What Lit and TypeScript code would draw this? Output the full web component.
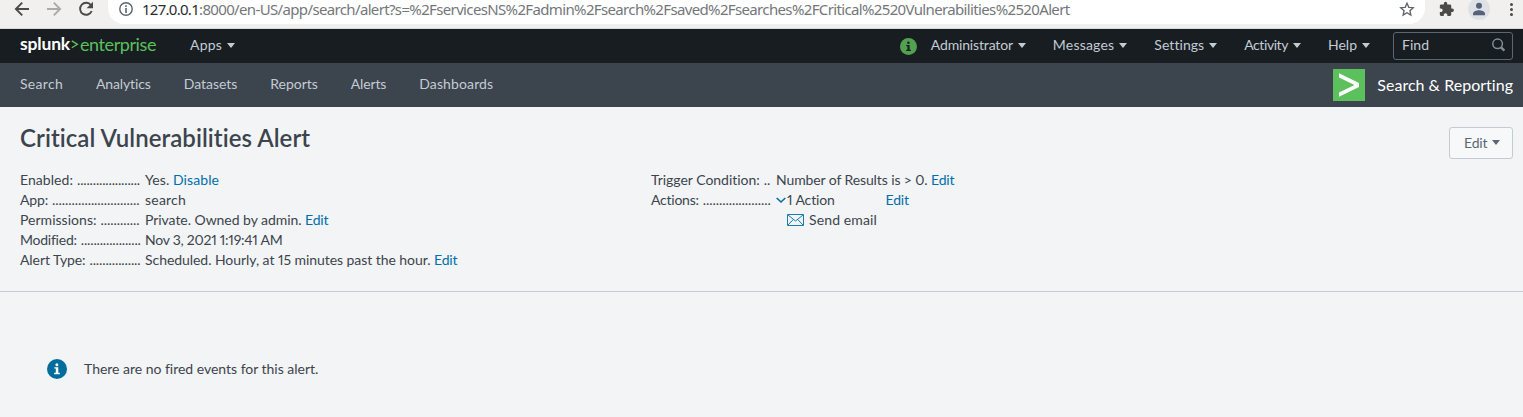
import { LitElement, html, css, svg } from "lit";
import { customElement, property } from "lit/decorators.js";

/** Text run tracked so that it takes exactly the given advance width. */
@customElement("tracked-text")
class TrackedText extends LitElement {
  @property({ type: Number }) width = 0;
  @property() text = "";

  static styles = css`
    :host { display: inline-block; white-space: pre; }
    .run { display: inline-block; white-space: pre; }
  `;

  updated() {
    const run = this.renderRoot.querySelector(".run") as HTMLElement;
    run.style.letterSpacing = "0";
    const natural = run.getBoundingClientRect().width;
    run.style.letterSpacing = `${(this.width - natural) / this.text.length}px`;
  }

  render() {
    return html`<span class="run">${this.text}</span>`;
  }
}

const t = (text: string, width: number) =>
  html`<tracked-text .text=${text} .width=${width}></tracked-text>`;

const caret = html`<svg class="caret" width="8" height="5" viewBox="0 0 8 5"><path d="M0 0h8L4 5z" fill="currentColor"/></svg>`;

const infoGlyph = svg`<circle cx="10" cy="10" r="10" fill="currentColor"/><g class="glyph"><circle cx="9.9" cy="5.7" r="1.5"/><path d="M7.3 8.2h4v5.6h1.5v1.4H7.2v-1.4h1.6V9.6H7.3z"/></g>`;

const NAV: [string, number][] = [
  ["Search", 43], ["Analytics", 55], ["Datasets", 53.5],
  ["Reports", 47.5], ["Alerts", 35.5], ["Dashboards", 74],
];
const MENUS: [string, number][] = [
  ["Administrator", 82], ["Messages", 61.5], ["Settings", 49.5], ["Activity", 44], ["Help", 29],
];

@customElement("app-root")
class AppRoot extends LitElement {
  static styles = css`
    :host {
      display: flex; flex-direction: column; width: 100%; height: 417px;
      overflow: hidden; background: #f2f4f5; color: #3c444d;
      font: 14px/20px Lato, "Open Sans", sans-serif;
      font-variant-numeric: proportional-nums;
    }
    * { box-sizing: border-box; }
    svg { display: block; flex: none; }
    .browser {
      flex: none; height: 29px; display: flex; background: #f1f0ef;
      border-bottom: 1px solid #d9dad8; color: #4a4a4a;
    }
    .tools { display: flex; width: 108px; }
    .omnibox {
      width: 1317px; height: 24px; background: #fff; border-radius: 0 0 16px 16px;
      display: flex; padding-left: 11px; color: #5f6368;
    }
    .url {
      flex: 1; padding-left: 8px; font: 15px/18px "Noto Sans", sans-serif;
      font-stretch: 90%; height: 20px; color: #74777a; white-space: pre;
    }
    .host { color: #2b2d30; }
    .browser-right { display: flex; }
    .global {
      flex: none; height: 34px; background: #171d21; display: flex; align-items: center;
      padding: 0 10px 0 20px; color: #c3cbd4;
    }
    .brand { display: flex; width: 170px; line-height: 22px; padding-bottom: 2px; color: #5cc05c; }
    .brand-name { font-size: 17.5px; font-weight: 700; color: #fff; }
    .brand-arrow { padding: 3px 1px 0 1px; }
    .brand-kind { font-size: 18px; }
    .menu { display: flex; align-items: center; gap: 5px; padding-bottom: 2px; }
    .spacer { flex: 1; }
    .health { color: #53a051; margin-right: 14px; }
    .health .glyph { fill: #171d21; }
    .menus { display: flex; gap: 27px; margin-right: 23px; }
    .find {
      width: 120px; height: 28px; border: 1px solid #5c6773; border-radius: 3px;
      display: flex; align-items: center; justify-content: space-between; padding: 0 7px 2px 8px;
    }
    .appbar {
      flex: none; height: 44px; background: #3c444d; color: #c3cbd4;
      display: flex; align-items: center; padding: 0 10px 0 20px;
    }
    .nav { display: flex; gap: 33px; padding-bottom: 2px; }
    .appname { display: flex; align-items: center; gap: 12px; color: #fff; font-size: 16px; }
    .appname-text { padding-bottom: 1px; }
    .header {
      flex: none; height: 185px; border-bottom: 1px solid #c3cbd4;
      padding: 17px 10px 0 20px;
    }
    .titlebar { display: flex; justify-content: space-between; height: 46px; }
    h1 { margin: 0; font-size: 24px; line-height: 28px; font-weight: 600; }
    .button {
      margin-top: 3px; width: 64px; height: 32px; border: 1px solid #c3cbd4; border-radius: 3px;
      background: #f7f8fa; color: #5c6773; display: flex; align-items: center;
      gap: 4px; padding: 0 0 1px 14px;
    }
    .details { display: grid; grid-template-columns: 631px 1fr; }
    .row { display: flex; height: 20px; white-space: pre; }
    .label { display: flex; width: 125px; gap: 4px; }
    .link { color: #006eaa; margin-left: 3.5px; }
    .action { display: flex; align-items: center; width: 106px; }
    .chevron { color: #006eaa; margin-right: 1px; }
    .email { display: flex; align-items: center; gap: 5px; padding-left: 136px; height: 20px; }
    .empty { display: flex; align-items: center; gap: 17px; padding: 67px 0 0 47px; }
    .empty-icon { color: #006d9c; }
    .empty-icon .glyph { fill: #fff; }
  `;

  row(label: string, labelWidth: number, dots: number, dotsWidth: number, value: unknown) {
    return html`<div class="row">
      <span class="label">${t(label, labelWidth)}${t(".".repeat(dots), dotsWidth)}</span>${value}</div>`;
  }

  link(text = "Edit", width = 23.5) {
    return html`<span class="link">${t(text, width)}</span>`;
  }

  render() {
    return html`
      <div class="browser">
        <div class="tools">
          <svg width="108" height="28" viewBox="0 0 108 28" fill="none" stroke-width="1.9">
            <path d="M29 9H16M22.2 2.7 15.9 9l6.3 6.3" stroke="#4a4a4a"/>
            <path d="M47 9h13M53.8 2.7 60.1 9l-6.3 6.3" stroke="#aaa"/>
            <path d="M91 5.3A6 6 0 1 0 91.7 11" stroke="#4a4a4a"/>
            <path d="M93 1.8v6.4h-6.4z" fill="#4a4a4a"/>
          </svg>
        </div>
        <div class="omnibox">
          <svg width="15" height="24" viewBox="0 0 15 24"><circle cx="7" cy="9" r="6.2" fill="none" stroke="currentColor" stroke-width="1.4"/><path d="M6.2 5.2h1.6v1.7H6.2zM6.2 8h1.6v5H6.2z" fill="currentColor"/></svg>
          <div class="url"><span class="host">${t("127.0.0.1", 57)}</span>${t(":8000/en-US/app/search/alert?s=%2FservicesNS%2Fadmin%2Fsearch%2Fsaved%2Fsearches%2FCritical%2520Vulnerabilities%2520Alert", 870.5)}</div>
          <svg width="26" height="24" viewBox="0 0 26 24"><path d="m8 3.2 1.8 4.1 4.500.4-3.400 3 1 4.400L8 12.800l-3.900 2.300 1-4.400-3.400-3 4.500-.4z" fill="none" stroke="currentColor" stroke-width="1.300"/></svg>
        </div>
        <div class="browser-right">
          <svg width="98" height="28" viewBox="0 0 98 28">
            <path transform="translate(13.500 1.200) scale(.67)" fill="#4a4a4a" d="M20.500 11H19V7c0-1.100-.9-2-2-2h-4V3.500a2.500 2.500 0 0 0-5 0V5H4c-1.100 0-1.990.9-1.990 2v3.800H3.500c1.490 0 2.700 1.210 2.700 2.700s-1.210 2.700-2.700 2.700H2V20c0 1.100.9 2 2 2h3.800v-1.500c0-1.490 1.210-2.700 2.700-2.700s2.700 1.210 2.700 2.700V22H17c1.100 0 2-.9 2-2v-4h1.500a2.500 2.500 0 0 0 0-5z"/>
            <circle cx="54" cy="9" r="11" fill="#dee1e6"/>
            <circle cx="54" cy="5.800" r="3" fill="#56627a"/>
            <path d="M48 15.200v-1.500c0-2.300 3.800-3.400 6-3.400s6 1.100 6 3.400v1.500z" fill="#56627a"/>
            <g fill="#4a4a4a"><circle cx="86.500" cy="4.500" r="1.500"/><circle cx="86.500" cy="9.500" r="1.500"/><circle cx="86.500" cy="14.500" r="1.500"/></g>
          </svg>
        </div>
      </div>

      <div class="global">
        <div class="brand">
          <span class="brand-name">${t("splunk", 50)}</span>
          <svg class="brand-arrow" width="10" height="24" viewBox="0 0 10 24"><path d="m1 5 7 4.300L1 13.600" fill="none" stroke="currentColor" stroke-width="1.700"/></svg>
          <span class="brand-kind">${t("enterprise", 76)}</span>
        </div>
        <div class="menu">${t("Apps", 32)}${caret}</div>
        <div class="spacer"></div>
        <svg class="health" width="17" height="17" viewBox="0 0 20 20">${infoGlyph}</svg>
        <div class="menus">
          ${MENUS.map(([name, w]) => html`<div class="menu">${t(name, w)}${caret}</div>`)}
        </div>
        <div class="find">
          ${t("Find", 27)}
          <svg width="13" height="14" viewBox="0 0 13 14" fill="none" stroke="#818d99"><circle cx="5.600" cy="5.800" r="4.800" stroke-width="1.500"/><path d="m9 9.300 3.400 3.400" stroke-width="2.400"/></svg>
        </div>
      </div>

      <div class="appbar">
        <div class="nav">${NAV.map(([name, w]) => t(name, w))}</div>
        <div class="spacer"></div>
        <div class="appname">
          <svg width="32" height="32" viewBox="0 0 32 32"><path fill="#5cc05c" d="M0 0h32v32H0z"/><path fill="#fff" d="M6 4.300 26 14v4L6 27.700v-4.200L21.500 16 6 8.500z"/></svg>
          <span class="appname-text">${t("Search & Reporting", 136)}</span>
        </div>
      </div>

      <div class="header">
        <div class="titlebar">
          <h1>${t("Critical Vulnerabilities Alert", 291)}</h1>
          <div class="button">${t("Edit", 23.5)}${caret}</div>
        </div>
        <div class="details">
          <div>
            ${this.row("Enabled:", 53, 20, 63, html`${t("Yes.", 24.5)}${this.link("Disable", 46)}`)}
            ${this.row("App:", 28, 27, 87.5, t("search", 41))}
            ${this.row("Permissions:", 76.5, 12, 39, html`${t("Private. Owned by admin.", 156.5)}${this.link()}`)}
            ${this.row("Modified:", 56.5, 19, 60, t("Nov 3, 2021 1:19:41 AM", 137.5))}
            ${this.row("Alert Type:", 65.5, 16, 51, html`${t("Scheduled. Hourly, at 15 minutes past the hour.", 285.5)}${this.link()}`)}
          </div>
          <div>
            ${this.row("Trigger Condition:", 109, 2, 6.5, html`${t("Number of Results is > 0.", 151.5)}${this.link()}`)}
            ${this.row("Actions:", 48, 21, 68, html`<span class="action"><svg class="chevron" width="10" height="8" viewBox="0 0 10 8"><path d="m.7 2 4.300 4 4.300-4" fill="none" stroke="currentColor" stroke-width="1.600"/></svg>${t("1 Action", 48)}</span>${this.link()}`)}
            <div class="email">
              <svg width="17" height="12" viewBox="0 0 17 12" fill="none" stroke="#006eaa"><path d="M.5.500h16v11H.5zM1 1l7.500 6L16 1M1 11l5.300-5.500M16 11l-5.300-5.500" stroke-width=".9"/></svg>
              ${t("Send email", 68)}
            </div>
          </div>
        </div>
      </div>

      <div class="empty">
        <svg class="empty-icon" width="20" height="20" viewBox="0 0 20 20">${infoGlyph}</svg>
        ${t("There are no fired events for this alert.", 234)}
      </div>
    `;
  }
}
